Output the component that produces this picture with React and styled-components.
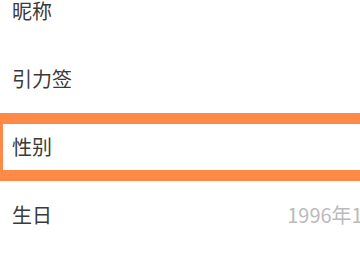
import React from "react";
import styled, { createGlobalStyle } from "styled-components";

const GlobalStyle = createGlobalStyle`
  html, body {
    margin: 0;
    padding: 0;
    background: #fff;
    overflow: hidden;
  }
  body {
    font-family: "Noto Sans CJK SC", "Noto Sans", sans-serif;
  }
`;

const rows = [
  { label: "昵称" },
  { label: "引力签" },
  { label: "性别", active: true },
  { label: "生日", value: "1996年10月12日" },
];

export default function App() {
  return (
    <>
      <GlobalStyle />
      <Screen>
        <List>
          {rows.map((row) => (
            <Row key={row.label} active={row.active}>
              <Label>{row.label}</Label>
              {row.value && <Value>{row.value}</Value>}
            </Row>
          ))}
        </List>
      </Screen>
    </>
  );
}

const Screen = styled.div`
  width: 360px;
  height: 270px;
  overflow: hidden;
`;

const List = styled.ul`
  list-style: none;
  margin: -23px 0 0;
  padding: 0;
  width: 448px;
`;

const Row = styled.li`
  box-sizing: border-box;
  height: 68px;
  display: flex;
  align-items: center;
  justify-content: space-between;
  padding: 0 12px;
  border: ${(p) => (p.active ? "11px solid #ff8a47" : "none")};
  margin-left: ${(p) => (p.active ? "-8px" : "0")};
  padding-left: ${(p) => (p.active ? "9px" : "12px")};
`;

const Label = styled.span`
  font-size: 20px;
  line-height: 1;
  color: #3a3a3a;
`;

const Value = styled.span`
  font-size: 20px;
  line-height: 1;
  color: #bbb;
`;
